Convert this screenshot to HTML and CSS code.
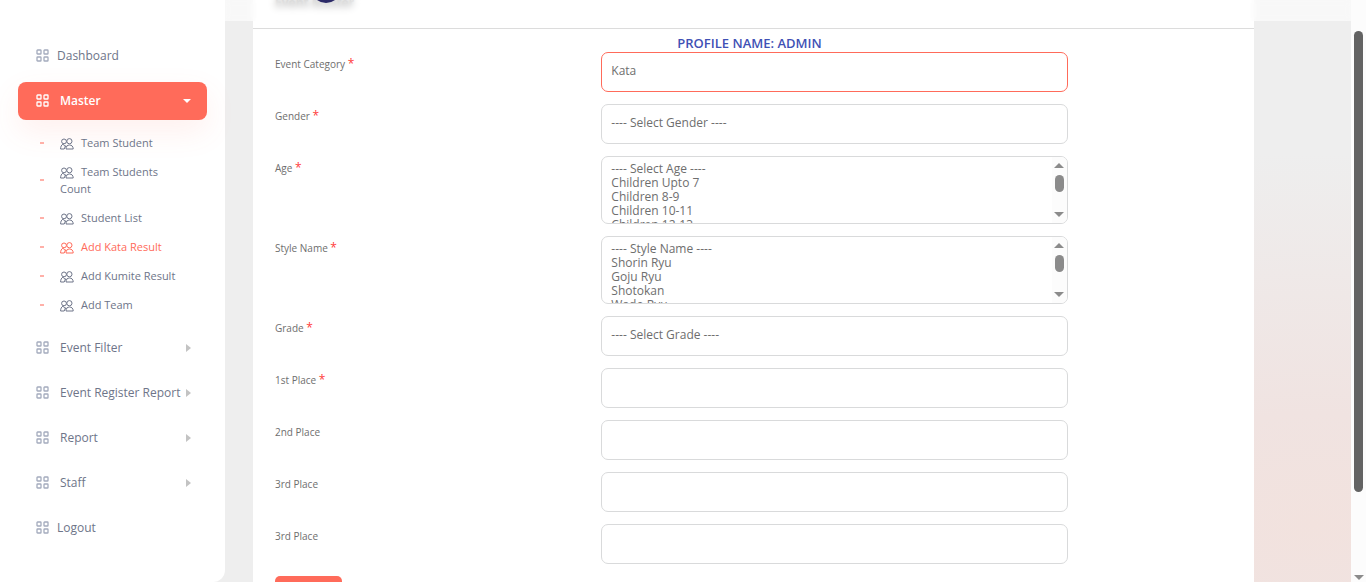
FILE: index.html
```html
<!DOCTYPE html>
<html lang="en">
<head>
    <meta charset="UTF-8">
    <meta name="viewport" content="width=device-width, initial-scale=1.0">
    <title>Add Kata Result</title>
    <link rel="stylesheet" href="styles.css">
</head>
<body>

<!-- Shared icons -->
<svg class="sprite" aria-hidden="true">
    <symbol id="icon-grid" viewBox="0 0 13 13">
        <g fill="none" stroke="currentColor" stroke-width="1.3">
            <rect x="1" y="1" width="4" height="4" rx="0.6"/>
            <rect x="8" y="1" width="4" height="4" rx="0.6"/>
            <rect x="1" y="8" width="4" height="4" rx="0.6"/>
            <rect x="8" y="8" width="4" height="4" rx="0.6"/>
        </g>
    </symbol>
    <symbol id="icon-users" viewBox="0 0 14 12">
        <g fill="none" stroke="currentColor" stroke-width="1">
            <circle cx="4" cy="3.4" r="2.4"/>
            <circle cx="9.4" cy="3.2" r="2.6"/>
            <path d="M6 11c0-2.6 1.3-4 3.5-4s3.7 1.4 3.7 4z"/>
            <path d="M0.6 11c0-2.5 0.8-4 2.3-4.8l2.8 2.6M0.6 11h3.6l1.6-3.6"/>
        </g>
    </symbol>
</svg>

<div class="layout">
    <nav class="sidebar">
        <ul class="menu">
            <li><a href="#" class="menu-link"><svg class="icon"><use href="#icon-grid"/></svg>Dashboard</a></li>
            <li>
                <a href="#" class="menu-link parent active"><svg class="icon"><use href="#icon-grid"/></svg>Master<span class="caret down"></span></a>
                <ul class="submenu">
                    <li><a href="#"><svg class="icon-sm"><use href="#icon-users"/></svg>Team Student</a></li>
                    <li><a href="#"><svg class="icon-sm"><use href="#icon-users"/></svg>Team Students Count</a></li>
                    <li><a href="#"><svg class="icon-sm"><use href="#icon-users"/></svg>Student List</a></li>
                    <li><a href="#" class="current"><svg class="icon-sm"><use href="#icon-users"/></svg>Add Kata Result</a></li>
                    <li><a href="#"><svg class="icon-sm"><use href="#icon-users"/></svg>Add Kumite Result</a></li>
                    <li><a href="#"><svg class="icon-sm"><use href="#icon-users"/></svg>Add Team</a></li>
                </ul>
            </li>
            <li><a href="#" class="menu-link parent"><svg class="icon"><use href="#icon-grid"/></svg>Event Filter<span class="caret"></span></a></li>
            <li><a href="#" class="menu-link parent"><svg class="icon"><use href="#icon-grid"/></svg>Event Register Report<span class="caret"></span></a></li>
            <li><a href="#" class="menu-link parent"><svg class="icon"><use href="#icon-grid"/></svg>Report<span class="caret"></span></a></li>
            <li><a href="#" class="menu-link parent"><svg class="icon"><use href="#icon-grid"/></svg>Staff<span class="caret"></span></a></li>
            <li><a href="#" class="menu-link"><svg class="icon"><use href="#icon-grid"/></svg>Logout</a></li>
        </ul>
    </nav>

    <main class="content">
        <div class="topbar"><span class="logo"></span></div>
        <div class="card">
            <div class="card-header">Event Master</div>
            <h1 class="profile">PROFILE NAME: ADMIN</h1>
            <form>
                <div class="row">
                    <label for="category">Event Category <span class="req">*</span></label>
                    <div class="field">
                        <select id="category" class="control focused"><option>Kata</option></select>
                    </div>
                </div>
                <div class="row">
                    <label for="gender">Gender <span class="req">*</span></label>
                    <div class="field">
                        <select id="gender" class="control"><option>---- Select Gender ----</option></select>
                    </div>
                </div>
                <div class="row">
                    <label for="age">Age <span class="req">*</span></label>
                    <div class="field">
                        <select id="age" class="control list" multiple>
                            <option>---- Select Age ----</option>
                            <option>Children Upto 7</option>
                            <option>Children 8-9</option>
                            <option>Children 10-11</option>
                            <option>Children 12-13</option>
                        </select>
                        <span class="list-scroll"><span class="list-thumb"></span></span>
                    </div>
                </div>
                <div class="row">
                    <label for="style">Style Name <span class="req">*</span></label>
                    <div class="field">
                        <select id="style" class="control list" multiple>
                            <option>---- Style Name ----</option>
                            <option>Shorin Ryu</option>
                            <option>Goju Ryu</option>
                            <option>Shotokan</option>
                            <option>Wado Ryu</option>
                        </select>
                        <span class="list-scroll"><span class="list-thumb"></span></span>
                    </div>
                </div>
                <div class="row">
                    <label for="grade">Grade <span class="req">*</span></label>
                    <div class="field">
                        <select id="grade" class="control"><option>---- Select Grade ----</option></select>
                    </div>
                </div>
                <div class="row">
                    <label for="place1">1st Place <span class="req">*</span></label>
                    <div class="field"><input type="text" id="place1" class="control"></div>
                </div>
                <div class="row">
                    <label for="place2">2nd Place</label>
                    <div class="field"><input type="text" id="place2" class="control"></div>
                </div>
                <div class="row">
                    <label for="place3">3rd Place</label>
                    <div class="field"><input type="text" id="place3" class="control"></div>
                </div>
                <div class="row">
                    <label for="place4">3rd Place</label>
                    <div class="field"><input type="text" id="place4" class="control"></div>
                </div>
                <button type="submit" class="btn" aria-label="Submit"></button>
            </form>
        </div>
    </main>

    <div class="scrollbar"><span class="thumb"></span><span class="arrow"></span></div>
</div>

</body>
</html>
```

FILE: styles.css
```css
* { box-sizing: border-box; }

html, body {
    margin: 0;
    padding: 0;
    font-family: 'Open Sans', 'Noto Sans', sans-serif;
    font-size: 12px;
    color: #6e6e6e;
    background: #fff;
}

.sprite { position: absolute; width: 0; height: 0; }

.layout {
    display: flex;
    height: 100vh;
    overflow: hidden;
    background: radial-gradient(ellipse 600px 370px at 96% 90%, #f2e2de 0, #f0e3e1 30%, #eeeeee 100%);
}

/* Sidebar */
.sidebar {
    flex: 0 0 225px;
    min-width: 0;
    padding: 37px 18px 0;
    background: #fff;
    border-bottom-right-radius: 12px;
}
.menu, .submenu { list-style: none; margin: 0; padding: 0; }
.menu > li { margin-bottom: 7px; }
.menu-link {
    display: flex;
    align-items: center;
    height: 38px;
    padding: 0 16px 1px 18px;
    border-radius: 8px;
    color: #6e7589;
    text-decoration: none;
    white-space: nowrap;
}
.menu-link.active {
    background: #ff6b5a;
    color: #fff;
    font-weight: 600;
    box-shadow: 0 12px 30px rgba(255, 107, 90, 0.1);
}
.icon { width: 13px; height: 13px; flex: none; margin-right: 8px; color: #a4abbd; }
.parent .icon { margin-right: 11px; }
.active .icon { color: #fff; }
.caret {
    margin-left: auto;
    border: 4px solid transparent;
    border-left: 5px solid #c3c3c3;
    border-right: 0;
}
.caret.down {
    border: 4px solid transparent;
    border-top: 4px solid #fff;
    border-bottom: 0;
}

.submenu { padding: 8px 0 3px; }
.submenu li {
    display: flex;
    align-items: center;
    padding: 6px 16px 6px 22px;
}
.submenu li::before {
    content: "";
    width: 4px;
    height: 2px;
    margin-right: 16px;
    background: #ffb0a8;
}
.submenu a {
    flex: 1;
    font-size: 11px;
    line-height: 17px;
    color: #6e7589;
    text-decoration: none;
}
.submenu a.current { color: #ff6b5a; }
.icon-sm { width: 14px; height: 12px; margin-right: 7px; vertical-align: -3px; }

/* Content */
.content { flex: 1; min-width: 0; position: relative; padding: 0 97px 0 28px; }
.topbar {
    position: absolute;
    top: 0;
    left: 0;
    right: 0;
    height: 21px;
    background: rgba(255, 255, 255, 0.6);
    backdrop-filter: blur(3px);
    overflow: hidden;
}
.logo {
    position: absolute;
    left: 86px;
    top: -27px;
    width: 30px;
    height: 30px;
    border-radius: 50%;
    background: #2c2a68;
}

.card {
    min-height: 100%;
    padding: 0 11px;
    background: #fff;
}
.card-header {
    height: 29px;
    margin: 0 -11px;
    padding: 0 22px;
    border-bottom: 1px solid #dcdcdc;
    font-size: 12px;
    font-weight: 700;
    line-height: 6px;
    color: #999;
    text-shadow: 0 0 4px #777;
}
.profile {
    margin: 0;
    padding: 5px 8px 0 0;
    font-size: 13px;
    font-weight: 600;
    line-height: 18px;
    text-align: center;
    color: #3f51b5;
}

.row { display: flex; margin-bottom: 12px; }
.row label {
    width: 33.333%;
    padding: 0 11px;
    font-size: 10px;
    line-height: 24px;
}
.req { color: #ff3b3b; font-size: 12px; line-height: 20px; }
.field { position: relative; width: 50%; padding: 0 12px 0 11px; }

.control {
    display: block;
    width: 100%;
    height: 40px;
    padding: 0 9px 3px;
    border: 1px solid #d9dadb;
    border-radius: 7px;
    background: #fff;
    font: inherit;
    color: #6e6e6e;
    appearance: none;
    outline: none;
}
.control.focused { border-color: #ff6b5a; }
.control.list { height: 68px; padding: 3px 9px 0; overflow: hidden; }
.list option { padding: 0; min-height: 14px; height: 14px; line-height: 14px; }

/* List box scrollbar */
.list-scroll {
    position: absolute;
    top: 1px;
    right: 13px;
    display: flex;
    flex-direction: column;
    align-items: center;
    width: 15px;
    height: 66px;
    padding: 6px 0;
    border-radius: 0 6px 6px 0;
    background: #fcfcfc;
}
.list-scroll::before, .list-scroll::after {
    content: "";
    border: 5px solid transparent;
}
.list-scroll::before { border-top: 0; border-bottom-color: #8b8b8b; }
.list-scroll::after { margin-top: auto; border-bottom: 0; border-top-color: #8b8b8b; }
.list-thumb {
    width: 9px;
    height: 17px;
    margin-top: 7px;
    border-radius: 5px;
    background: #8b8b8b;
}

.btn {
    width: 67px;
    height: 38px;
    margin-left: 11px;
    border: 0;
    border-radius: 5px;
    background: #ff6b5a;
}

/* Page scrollbar */
.scrollbar {
    display: flex;
    flex-direction: column;
    align-items: center;
    flex: 0 0 15px;
    padding: 31px 0 2px;
    background: #fcfcfc;
}
.thumb { flex: 0 0 84%; width: 9px; border-radius: 5px; background: #636363; }
.arrow {
    margin-top: auto;
    border: 5px solid transparent;
    border-top-color: #8b8b8b;
    border-bottom: 0;
}
```
